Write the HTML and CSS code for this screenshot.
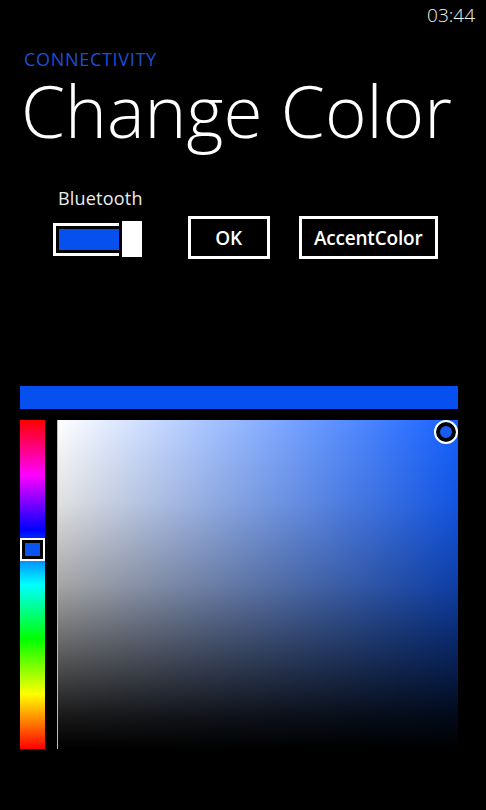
FILE: index.html
```html
<!DOCTYPE html>
<html>
<head>
<meta charset="utf-8">
<link rel="stylesheet" href="styles.css">
</head>
<body>
<div class="phone">
  <div class="status">03:44</div>
  <div class="header">
    <div class="app-title">CONNECTIVITY</div>
    <div class="page-title">Change Color</div>
  </div>
  <div class="controls">
    <div class="toggle-group">
      <div class="toggle-label">Bluetooth</div>
      <div class="toggle">
        <div class="toggle-track"><div class="toggle-fill"></div></div>
        <div class="toggle-thumb"></div>
      </div>
    </div>
    <div class="btn btn-ok">OK</div>
    <div class="btn btn-accent">AccentColor</div>
  </div>
  <div class="picker">
    <div class="preview"></div>
    <div class="picker-body">
      <div class="hue">
        <div class="hue-sel"><div class="hue-sel-in"></div></div>
      </div>
      <div class="sv">
        <div class="sv-sel"></div>
      </div>
    </div>
  </div>
</div>
</body>
</html>
```
FILE: styles.css
```css
html, body {
  margin: 0;
  padding: 0;
  background: #000;
}
.phone {
  width: 486px;
  height: 810px;
  background: #000;
  color: #fff;
  font-family: "Open Sans", "Noto Sans", sans-serif;
  overflow: hidden;
}
.status {
  height: 30px;
  text-align: right;
  padding-right: 11px;
  font-size: 19px;
  line-height: 30px;
  font-weight: 300;
  color: #f2f2f2;
}
.header {
  padding-left: 24px;
}
.app-title {
  margin-top: 18px;
  font-size: 18px;
  line-height: 22px;
  color: #1b4fd8;
  letter-spacing: 0.7px;
}
.page-title {
  margin-top: 4px;
  font-size: 71px;
  line-height: 74px;
  font-weight: 300;
  letter-spacing: 0;
  margin-left: -3px;
}
.controls {
  display: flex;
  align-items: flex-end;
  padding-left: 53px;
  margin-top: 38px;
}
.toggle-group {
  display: flex;
  flex-direction: column;
}
.toggle-label {
  font-size: 18px;
  line-height: 24px;
  padding-left: 5px;
  color: #ececec;
  letter-spacing: 0.2px;
}
.toggle {
  display: flex;
  align-items: center;
  margin-top: 11px;
  margin-bottom: 2px;
}
.toggle-track {
  box-sizing: border-box;
  width: 66px;
  height: 33px;
  border: 3px solid #fff;
  border-right: none;
  padding: 3px 0 3px 3px;
}
.toggle-fill {
  width: 100%;
  height: 100%;
  background: #0650ee;
}
.toggle-thumb {
  width: 20px;
  height: 36px;
  background: #fff;
  margin-left: 3px;
}
.btn {
  box-sizing: border-box;
  height: 43px;
  border: 3px solid #fff;
  display: flex;
  align-items: center;
  justify-content: center;
  font-size: 19px;
  font-weight: 600;
  letter-spacing: -0.2px;
}
.btn-ok {
  width: 82px;
  margin-left: 45px;
}
.btn-accent {
  width: 139px;
  margin-left: 29px;
}
.picker {
  margin-top: 127px;
  margin-left: 20px;
  width: 438px;
}
.preview {
  height: 23px;
  background: #0650ef;
}
.picker-body {
  display: flex;
  margin-top: 11px;
  height: 329px;
}
.hue {
  position: relative;
  width: 25px;
  background: linear-gradient(to bottom, #f00 0%, #f0f 16.67%, #00f 33.33%, #0ff 50%, #0f0 66.67%, #ff0 83.33%, #f00 100%);
}
.hue-sel {
  position: absolute;
  left: 0;
  top: 118px;
  width: 25px;
  height: 23px;
  box-sizing: border-box;
  border: 2px solid #fff;
  background: #000;
  padding: 3px;
}
.hue-sel-in {
  width: 100%;
  height: 100%;
  background: #0a55f0;
}
.sv {
  position: relative;
  flex: 1;
  margin-left: 12px;
  border-left: 1px solid #bbb;
  background:
    linear-gradient(to bottom, rgba(0,0,0,0) 0%, rgba(0,0,0,0.12) 25%, rgba(0,0,0,0.35) 50%, rgba(0,0,0,0.65) 72%, rgba(0,0,0,0.9) 90%, #000 100%),
    linear-gradient(to right, #fff 0%, #1560ff 100%);
}
.sv-sel {
  position: absolute;
  right: 0;
  top: 0;
  width: 24px;
  height: 24px;
  box-sizing: border-box;
  border-radius: 50%;
  border: 2px solid #fff;
  box-shadow: inset 0 0 0 4px #000;
  background: #1a5cf0;
}
```
